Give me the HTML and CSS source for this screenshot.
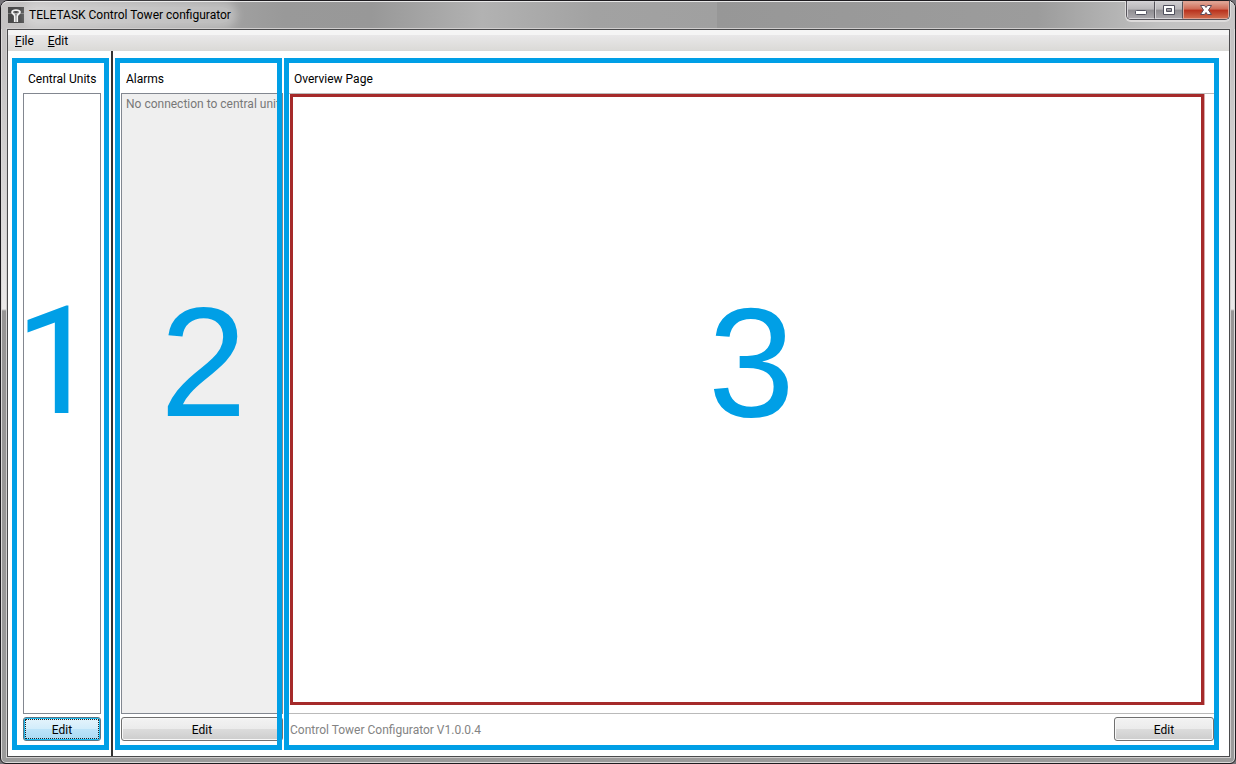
FILE: index.html
```html
<!DOCTYPE html>
<html lang="en">
<head>
    <meta charset="UTF-8">
    <meta name="viewport" content="width=device-width, initial-scale=1.0">
    <title>TELETASK Control Tower configurator</title>
    <link rel="stylesheet" href="styles.css">
</head>
<body>
    <div class="window">
        <header class="titlebar">
            <svg class="app-icon" viewBox="0 0 16 16" aria-hidden="true">
                <rect width="16" height="16" fill="#4a4a4a"/>
                <path d="M0 6.500h16" stroke="#777" stroke-width="1"/>
                <path d="M4 5C4.500 2.500 11.500 2.500 12 5C12 7 9.500 7 9.200 9V15M4 5C4 7 6.500 7 6.800 9V15" fill="none" stroke="#f4f4f4" stroke-width="1.800"/>
                <path d="M6 5.500l2 2 2-2" fill="none" stroke="#ddd" stroke-width="1"/>
            </svg>
            <h1 class="title">TELETASK Control Tower configurator</h1>
            <div class="caption-buttons">
                <button class="caption" aria-label="Minimize">
                    <svg width="14" height="12" viewBox="0 0 14 12"><rect x="1.500" y="6.500" width="11" height="4" rx="1" fill="#fff" stroke="#50505e"/></svg>
                </button>
                <button class="caption" aria-label="Maximize">
                    <svg width="14" height="12" viewBox="0 0 14 12"><path fill-rule="evenodd" d="M1.500 1.500h11v9h-11zM4.500 4.500h5v3h-5z" fill="#fff" stroke="#50505e"/></svg>
                </button>
                <button class="caption close" aria-label="Close">
                    <svg width="14" height="12" viewBox="0 0 14 12"><path d="M1.500 1.500h4L7 3.500l1.500-2h4L9.500 6l3 4.500h-4L7 8.500l-1.500 2h-4L4.500 6z" fill="#fff" stroke="#5a4a58"/></svg>
                </button>
            </div>
        </header>

        <div class="client">
            <nav class="menubar">
                <button class="menu"><u>F</u>ile</button>
                <button class="menu"><u>E</u>dit</button>
            </nav>

            <main class="workspace">
                <div class="sidebar">
                    <section class="panel units">
                        <h2 class="heading">Central Units</h2>
                        <ul class="list"></ul>
                        <button class="button default">Edit</button>
                        <span class="number">1</span>
                    </section>
                </div>

                <div class="content">
                    <section class="panel alarms">
                        <h2 class="heading">Alarms</h2>
                        <ul class="list disabled">
                            <li>No connection to central unit</li>
                        </ul>
                        <button class="button">Edit</button>
                        <span class="number">2</span>
                    </section>

                    <section class="panel overview">
                        <h2 class="heading">Overview Page</h2>
                        <div class="page-area">
                            <div class="page"></div>
                        </div>
                        <footer class="footer">
                            <span class="version">Control Tower Configurator V1.0.0.4</span>
                            <button class="button">Edit</button>
                        </footer>
                        <span class="number">3</span>
                    </section>
                </div>
            </main>
        </div>
    </div>
</body>
</html>
```
FILE: styles.css
```css
* {
    box-sizing: border-box;
}
body {
    margin: 0;
    background: #77757a;
    font-family: Roboto, "Open Sans", sans-serif;
    font-size: 12px;
    line-height: 16px;
    color: #000;
}
button {
    font: inherit;
    color: inherit;
}

/* window frame */
.window {
    display: flex;
    flex-direction: column;
    min-height: 100vh;
    padding: 0 5px 6px 6px;
    border: 1px solid #1e1c20;
    border-radius: 8px 8px 6px 6px;
    background: linear-gradient(#c4c2c2 0, #c4c2c2 60px, #eae8e8 308px, #979595 310px, #9b9b9b 100%);
    box-shadow: inset 0 0 0 1px #dcdada;
}
.titlebar {
    display: flex;
    align-items: flex-start;
    height: 28px;
    margin: 0 -5px 0 -6px;
    padding-left: 7px;
    border-radius: 7px 7px 0 0;
    border-top: 1px solid #e8e8e8;
    background:
        linear-gradient(90deg, #c6c4c4 0, #b4b3b3 8%, #999 23%, #989898 30%, #b2b2b2 39%, #a2a2a2 48%, #a0a0a0 58%, #979797 58%, #9c9c9c 84%, #c2c2c2 94%, #c8c6c6 100%);
}
.app-icon {
    width: 16px;
    height: 16px;
    margin-top: 5px;
}
.title {
    margin: 5px 0 0 5px;
    font-size: 12px;
    font-weight: normal;
    line-height: 16px;
    border-radius: 8px;
    background: rgba(255, 255, 255, 0.3);
    box-shadow: 0 0 8px 6px rgba(255, 255, 255, 0.3);
}
.caption-buttons {
    display: flex;
    height: 19px;
    margin: -1px 5px 0 auto;
    border: 1px solid #55535a;
    border-top: 0;
    border-radius: 0 0 5px 5px;
    box-shadow: 0 1px 0 1px #dddbdb;
    overflow: hidden;
}
.caption {
    display: flex;
    align-items: center;
    justify-content: center;
    width: 28px;
    padding: 0;
    border: 1px solid #d6d4d8;
    border-right-color: #55535a;
    background: linear-gradient(#cfcdd0 0, #b9b7ba 45%, #8f8d92 50%, #a9a7ac 100%);
}
.caption.close {
    width: 46px;
    border-color: #e0a090;
    background: linear-gradient(#e0a595 0, #cf6a55 45%, #b8301c 50%, #d06a4c 100%);
}

.client {
    flex: 1;
    display: flex;
    flex-direction: column;
    border: 1px solid #4a4a4c;
    background: #fff;
    box-shadow: 0 0 0 1px #d0cece;
}
.menubar {
    display: flex;
    gap: 14px;
    height: 21px;
    padding: 0 7px;
    background: linear-gradient(#f5f5f5 5px, #e9e8e9 5px, #dad9d6 100%);
}
.menu {
    padding: 0;
    border: 0;
    background: none;
}

/* workspace */
.workspace {
    flex: 1;
    display: flex;
}
.sidebar {
    display: flex;
    padding: 7px 2px 6px 4px;
    border-right: 2px solid #333;
}
.content {
    flex: 1;
    display: flex;
    gap: 2px;
    padding: 7px 10px 6px 2px;
}
.panel {
    position: relative;
    display: flex;
    flex-direction: column;
    padding: 13px 6px 9px;
}
.panel::after {
    content: "";
    position: absolute;
    inset: 0;
    border: 5px solid #009fe6;
    pointer-events: none;
}
.units {
    width: 97px;
    padding-left: 11px;
    padding-right: 8px;
}
.alarms {
    width: 167px;
    padding-right: 0;
}
.overview {
    flex: 1;
    padding-left: 5px;
    padding-right: 5px;
}
.heading {
    margin: 0 0 6px;
    padding-left: 5px;
    font-size: 12px;
    font-weight: normal;
    line-height: 16px;
    white-space: nowrap;
}
.list {
    flex: 1;
    margin: 0 0 3px;
    padding: 2px 4px;
    border: 1px solid #828790;
    list-style: none;
    white-space: nowrap;
    overflow: hidden;
}
.list.disabled {
    background: #efefef;
    color: #787878;
}
/* the alarm column runs on under the edge of its frame */
.alarms .list,
.alarms .button {
    margin-right: -1px;
}
.page-area {
    flex: 1;
    display: flex;
    margin-bottom: 3px;
    padding: 0 10px 8px 1px;
    border: 1px solid #bababa;
    border-width: 1px 0;
}
.page {
    flex: 1;
    border: 3px solid #a52a2a;
    box-shadow: 1px 0 0 #d8a8a8;
}
.footer {
    display: flex;
    align-items: center;
    justify-content: space-between;
    padding-left: 1px;
}
.version {
    padding-top: 2px;
    color: #838383;
}
.button {
    height: 24px;
    padding: 2px 0 0;
    border: 1px solid #707070;
    border-radius: 3px;
    background: linear-gradient(#f3f3f3 0, #ebebeb 50%, #dcdcdc 50%, #cdcdcd 100%);
    box-shadow: inset 0 0 0 1px #f8f8f8;
}
.footer .button {
    width: 100px;
}
.button.default {
    border-color: #5a7684;
    background: linear-gradient(#e5f4fc 0, #d2edfb 50%, #bde4f9 50%, #a8d9f3 100%);
    box-shadow: inset 0 0 0 1px #1cb8ee;
    outline: 1px dotted #222;
    outline-offset: -3px;
}

/* callout numbers over the panels */
.number {
    position: absolute;
    top: calc(50% - 120px);
    left: 0;
    font-family: "Liberation Sans", Arial, sans-serif;
    font-size: 156px;
    line-height: 156px;
    color: #009fe6;
    pointer-events: none;
}
.units .number {
    left: 3px;
    font-family: Roboto, sans-serif;
    font-size: 150px;
}
.alarms .number,
.overview .number {
    right: 0;
    text-align: center;
}
.alarms .number {
    left: 10px;
}
```
